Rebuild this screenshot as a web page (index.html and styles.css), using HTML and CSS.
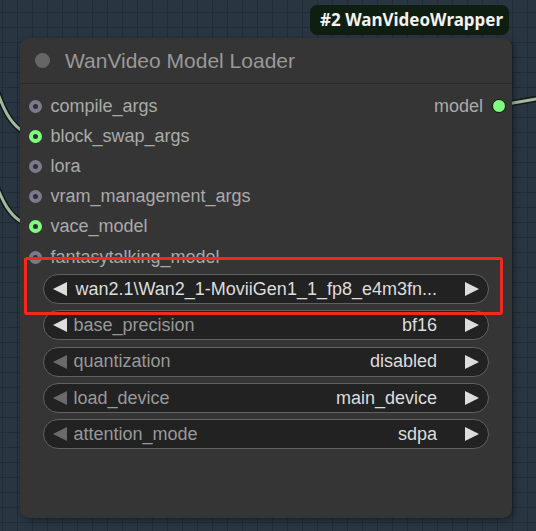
FILE: index.html
```html
<!DOCTYPE html>
<html lang="en">
<head>
  <meta charset="UTF-8" />
  <meta name="viewport" content="width=device-width, initial-scale=1.0"/>
  <title>WanVideo Model Loader</title>
  <link rel="stylesheet" href="styles.css">
</head>
<body>
  <div class="canvas">
    <svg class="wires" width="536" height="531" viewBox="0 0 536 531">
      <g class="wire-outline">
        <path d="M -10 70 C 0 102, 10 133, 35 135" />
        <path d="M -10 168 C 0 197, 10 224, 35 226" />
        <path d="M 499 105 C 515 104, 525 99, 560 96" />
      </g>
      <g class="wire-core">
        <path d="M -10 70 C 0 102, 10 133, 35 135" />
        <path d="M -10 168 C 0 197, 10 224, 35 226" />
        <path d="M 499 105 C 515 104, 525 99, 560 96" />
      </g>
    </svg>

    <div class="badge">#2 WanVideoWrapper</div>

    <div class="node">
      <div class="node-title">
        <span class="title-dot"></span>
        <span>WanVideo Model Loader</span>
      </div>

      <div class="slots">
        <div class="slot-row">
          <div class="slot-in"><span class="dot"></span>compile_args</div>
          <div class="slot-out">model<span class="dot-out"></span></div>
        </div>
        <div class="slot-row">
          <div class="slot-in"><span class="dot dot-linked"></span>block_swap_args</div>
        </div>
        <div class="slot-row">
          <div class="slot-in"><span class="dot"></span>lora</div>
        </div>
        <div class="slot-row">
          <div class="slot-in"><span class="dot"></span>vram_management_args</div>
        </div>
        <div class="slot-row">
          <div class="slot-in"><span class="dot dot-linked"></span>vace_model</div>
        </div>
        <div class="slot-row">
          <div class="slot-in"><span class="dot"></span>fantasytalking_model</div>
        </div>
      </div>

      <div class="widgets">
        <div class="widget">
          <span class="arrow-left"></span>
          <span class="widget-label"></span>
          <span class="widget-value">wan2.1\Wan2_1-MoviiGen1_1_fp8_e4m3fn...</span>
          <span class="arrow-right"></span>
        </div>
        <div class="widget">
          <span class="arrow-left"></span>
          <span class="widget-label">base_precision</span>
          <span class="widget-value">bf16</span>
          <span class="arrow-right"></span>
        </div>
        <div class="widget">
          <span class="arrow-left arrow-dim"></span>
          <span class="widget-label">quantization</span>
          <span class="widget-value">disabled</span>
          <span class="arrow-right"></span>
        </div>
        <div class="widget">
          <span class="arrow-left arrow-dim"></span>
          <span class="widget-label">load_device</span>
          <span class="widget-value">main_device</span>
          <span class="arrow-right"></span>
        </div>
        <div class="widget">
          <span class="arrow-left arrow-dim"></span>
          <span class="widget-label">attention_mode</span>
          <span class="widget-value">sdpa</span>
          <span class="arrow-right"></span>
        </div>
      </div>
    </div>

    <div class="highlight"></div>
  </div>
</body>
</html>
```

FILE: styles.css
```css
body {
  margin: 0;
  font-family: "Liberation Sans", Arial, sans-serif;
  background: #293642;
}
.canvas {
  position: relative;
  width: 536px;
  height: 531px;
  overflow: hidden;
  background-color: #293642;
  background-image:
    linear-gradient(#212c36 1px, transparent 1px),
    linear-gradient(90deg, #212c36 1px, transparent 1px);
  background-size: 15px 15px;
  background-position: 2px 12px;
}
.wires {
  position: absolute;
  left: 0;
  top: 0;
}
.wires path {
  fill: none;
}
.wire-outline path {
  stroke: #141a1c;
  stroke-width: 6;
}
.wire-core path {
  stroke: #a3b9a0;
  stroke-width: 3;
}
.badge {
  position: absolute;
  left: 310px;
  top: 5px;
  width: 199px;
  height: 30px;
  box-sizing: border-box;
  padding-left: 10px;
  background: #0f1e11;
  border-radius: 7px;
  color: #f2f2f2;
  font-family: "Noto Sans", "Open Sans", sans-serif;
  font-weight: bold;
  font-size: 17px;
  line-height: 30px;
  white-space: nowrap;
}
.node {
  position: absolute;
  left: 20px;
  top: 38px;
  width: 492px;
  height: 480px;
  background: #353535;
  border-radius: 9px;
  box-shadow: 2px 2px 6px rgba(0, 0, 0, 0.4);
}
.node-title {
  display: flex;
  align-items: center;
  gap: 15px;
  height: 45px;
  padding-left: 15px;
  border-bottom: 1px solid #2a2a2a;
  color: #999;
  font-size: 21px;
}
.title-dot {
  width: 15px;
  height: 15px;
  border-radius: 50%;
  background: #666;
}
.slots {
  padding-top: 7px;
}
.slot-row {
  display: flex;
  align-items: center;
  justify-content: space-between;
  height: 30.2px;
  padding: 0 6px 0 8.5px;
  color: #aaa;
  font-size: 18px;
}
.slot-in, .slot-out {
  display: flex;
  align-items: center;
}
.dot {
  width: 13px;
  height: 13px;
  box-sizing: border-box;
  margin-right: 9px;
  border-radius: 50%;
  border: 4px solid #7a7a8c;
  background: #2e2e2e;
}
.dot-linked {
  border-color: #7dff7d;
}
.dot-out {
  width: 14px;
  height: 14px;
  box-sizing: border-box;
  margin-left: 9px;
  border-radius: 50%;
  border: 1.5px solid #111;
  background: #7dff7d;
}
.widgets {
  display: flex;
  flex-direction: column;
  gap: 6.3px;
  margin-top: 2px;
  padding: 0 23px;
}
.widget {
  display: flex;
  align-items: center;
  height: 30px;
  box-sizing: border-box;
  padding: 0 9px;
  background: #222;
  border: 1px solid #616161;
  border-radius: 15px;
  font-size: 18px;
  white-space: nowrap;
}
.arrow-left {
  width: 0;
  height: 0;
  border-top: 7px solid transparent;
  border-bottom: 7px solid transparent;
  border-right: 14px solid #ddd;
}
.arrow-right {
  width: 0;
  height: 0;
  margin-left: 28px;
  border-top: 7px solid transparent;
  border-bottom: 7px solid transparent;
  border-left: 14px solid #ddd;
}
.arrow-dim {
  border-right-color: #6a6a6a;
}
.widget-label {
  flex: 1;
  margin-left: 6.5px;
  color: #999;
}
.widget-value {
  color: #ddd;
}
.highlight {
  position: absolute;
  left: 24px;
  top: 257px;
  width: 479px;
  height: 58px;
  box-sizing: border-box;
  border: 3px solid #f22a1e;
  border-radius: 3px;
}
```
